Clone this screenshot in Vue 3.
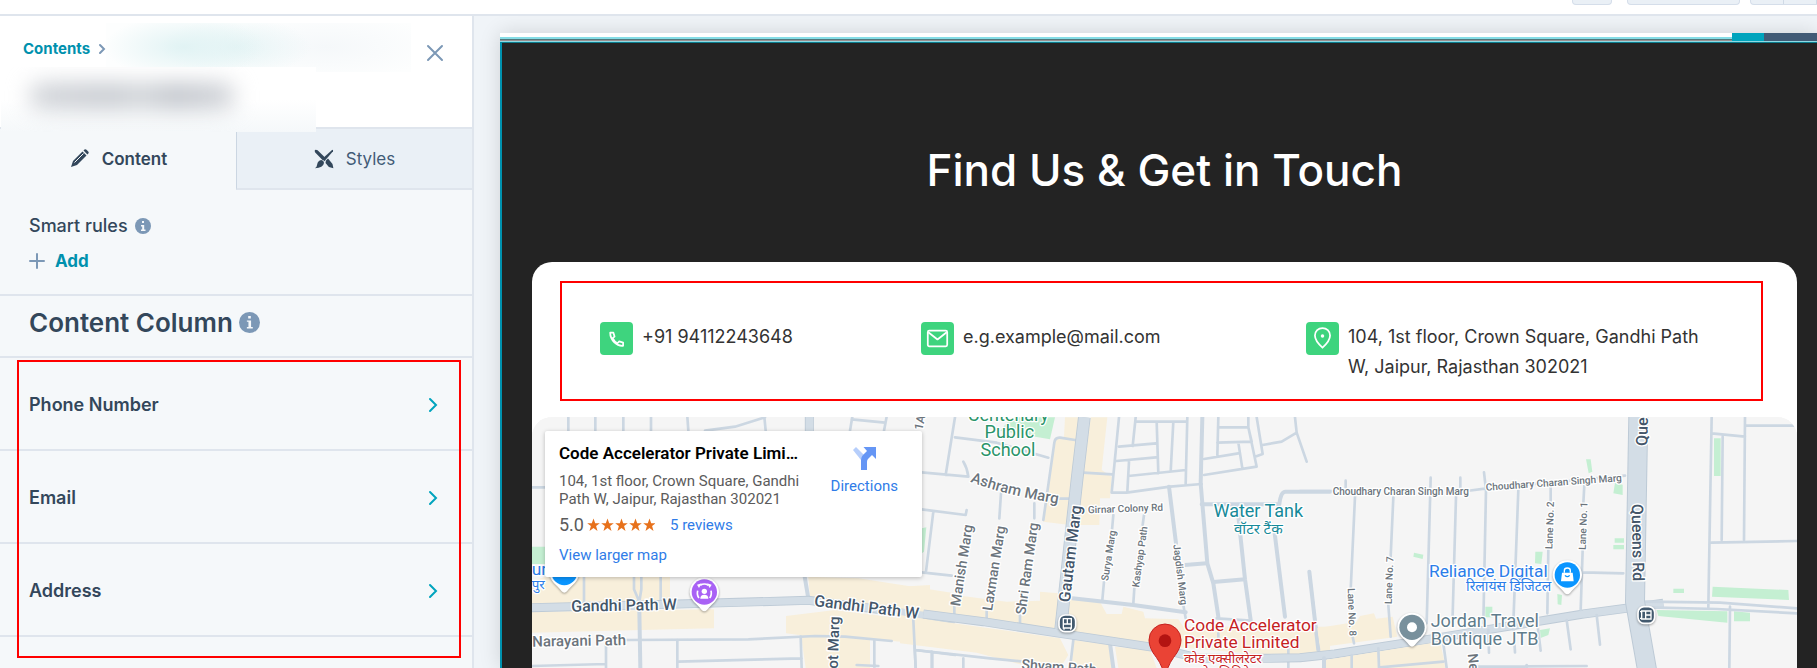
<script setup>
const rows = ['Phone Number', 'Email', 'Address']

// Minor streets, in map tile units, one list per tile
const minorWest = [
  'M130 20V62M211 20V62M295 20V62M378 20V62M487 20L490 62M540 62L630 50L720 22M718 20L722 62M975 62L982 20M1077 62L1085 20M980 28L1080 38',
  'M20 232H60M177 500V575M407 500V575M327 500V538L343 575M349 500V538L343 575M300 690L670 688L870 678L960 680L1100 693',
  'M457 690V774M460 755L830 745M827 680L830 774M243 700V774M20 768L243 762M1048 690V774M995 765L1060 768M1165 630L1172 774M1170 720L1290 735M1220 725V774'
]
const minorMid = [
  'M165 22L137 195M165 82L290 98L445 143M65 187L205 200M190 155Q202 175 205 200M65 298L197 315L200 300M100 305L78 485M65 487L155 497',
  'M303 250L298 325M403 280V325M430 330L463 98Q465 82 480 83L525 90M475 266H510M163 590V620M260 600V635M360 610V645',
  'M550 188L637 193M657 22L635 248H680L810 230L905 222M657 110L768 100M650 153L768 142M707 22L698 108M707 35H858M770 35L775 190M820 35L812 185M687 155L682 245M685 198L858 180M862 22L857 222',
  'M640 315L636 360M612 515L607 570M732 315L728 345M703 535L700 580M850 585L857 625M955 22L952 135M955 52L1045 52L1055 95L952 98M912 147L1015 130M1015 98L1027 175M912 195L1070 170L1045 52V22M1070 22L1088 132L1065 140M1088 105L1145 95L1190 68L1185 22M1190 68L1220 155',
  'M950 625L1052 632M520 690L510 774M40 630L47 774M45 720L270 745L370 755M97 730V774M190 745V774M955 670V715M1165 690V730M1165 755V774'
]
const midStreets =
  'M517 565L700 585L857 607M807 230L828 400M905 283H1138Q1142 245 1156 245H1290M855 465L920 460M940 516L1035 508M1012 290L1035 508L1052 630M1124 370L1155 620M1228 485L1255 720M630 700L640 774M1275 740L1272 774'
const minorEast = [
  'M0 243H120M500 243L560 235L975 197M137 212V240M165 260L152 540M158 680L162 700M280 262L272 440M265 585L272 680M392 203L380 640M481 203V240M468 260L457 650M552 187L558 240L550 640M655 240L640 640L645 727M752 230V275M745 420L742 610M853 225L850 280M848 420L842 600M848 487L970 490',
  'M28 485L55 715M565 660L567 728M712 640L722 722M800 630L812 718M890 615L900 704M430 700L440 774M240 772L430 755M155 735V774M235 715L237 774M525 770L860 768M680 765V774',
  'M1235 22L1225 590M1235 70L1335 80M1335 22L1332 390M1268 80L1265 390M1335 47H1490M1235 398L1490 393M1035 575L1260 578L1490 595M1045 592L1250 597L1490 610M1290 590L1288 774'
]
</script>

<template>
  <div class="app">
    <header class="toolbar">
      <button type="button" class="tool" aria-label="Undo"></button>
      <button type="button" class="tool wide" aria-label="Preview"></button>
      <div class="split">
        <button type="button" aria-label="Desktop"></button>
        <button type="button" aria-label="Mobile"></button>
      </div>
    </header>

    <div class="body">
      <aside class="sidebar">
        <div class="head">
          <nav class="crumbs">
            <a href="#">Contents</a>
            <svg width="8" height="12" viewBox="0 0 8 12"><path d="M2 2l4 4-4 4" /></svg>
          </nav>
          <button type="button" class="close" aria-label="Close">
            <svg width="18" height="18" viewBox="0 0 18 18"><path d="M2 2l14 14M16 2L2 16" /></svg>
          </button>
          <div class="redacted-crumb"></div>
          <div class="redacted-title"></div>
        </div>

        <div class="tabs" role="tablist">
          <button type="button" role="tab" aria-selected="true" class="tab active">
            <svg width="20" height="20" viewBox="0 0 20 20">
              <path d="M1 18l2-6L12.500 2.500l4 4L7 16z" />
              <path d="M13.500 1.500L14.500.5q1-.7 2 .2l1.700 1.700q1 1 .1 2L17.400 5.400z" />
              <path class="cut" d="M4.500 13.500l9-9" />
            </svg>
            Content
          </button>
          <button type="button" role="tab" aria-selected="false" class="tab">
            <svg width="20" height="20" viewBox="0 0 20 20">
              <path d="M1.200 3.600Q.2 1.800 1 1t2.600.2L11 8.600 8.500 11z" />
              <path d="M12 11.500l2-2 4.500 5.500.9 4.300-4.500-1.200-3.400-4z" />
              <path d="M18.300.7q1.200.4.7 1.500l-8.600 10-2.300-2.300z" />
              <path d="M7.200 11q3 .7 2.700 3.200-.6 4.500-9 5 2-1 2.200-3.500Q3.800 11.500 7.200 11z" />
            </svg>
            Styles
          </button>
        </div>

        <section class="smart">
          <div class="smart-title">
            Smart rules
            <svg class="info" width="16" height="16" viewBox="0 0 16 16">
              <circle cx="8" cy="8" r="8" />
              <path d="M7 3h2v2H7zM6 7h3.200v4.500H10.500V13H6v-1.500h1.200V8.500H6z" />
            </svg>
          </div>
          <button type="button" class="add">
            <svg width="16" height="16" viewBox="0 0 16 16"><path d="M8 1v14M1 8h14" /></svg>
            Add
          </button>
        </section>

        <h2 class="group">
          Content Column
          <svg class="info" width="21" height="21" viewBox="0 0 16 16">
            <circle cx="8" cy="8" r="8" />
            <path d="M7 3h2v2H7zM6 6.500h3.200v5H10.500V12.500H6v-1h1.200V7.500H6z" />
          </svg>
        </h2>

        <div class="fields">
          <button v-for="row in rows" :key="row" type="button" class="field">
            {{ row }}
            <svg width="10" height="16" viewBox="0 0 10 16"><path d="M2 2l6 6-6 6" /></svg>
          </button>
          <div class="marker"></div>
        </div>
      </aside>

      <main class="canvas">
        <div class="frame">
          <div class="strip"><span class="chip teal"></span><span class="chip slate"></span></div>
          <section class="module">
            <h1>Find Us &amp; Get in Touch</h1>
            <div class="card">
              <div class="contacts">
                <div class="contact">
                  <span class="badge">
                    <svg width="34" height="34" viewBox="0 0 34 34">
                      <path d="M10.500 11h3.300l1.200 4-2 1.700q1.700 3.600 5 5.200l1.800-2 4 1.300v3.300q-5 .5-9-3.500-4.300-4.500-4.300-10z" />
                    </svg>
                  </span>
                  <span>+91 94112243648</span>
                </div>
                <div class="contact">
                  <span class="badge">
                    <svg width="34" height="34" viewBox="0 0 34 34">
                      <rect x="7" y="9" width="20" height="16" rx="1.500" /><path d="M7.500 10.500L17 18l9.500-7.500" />
                    </svg>
                  </span>
                  <span>e.g.example@mail.com</span>
                </div>
                <div class="contact">
                  <span class="badge">
                    <svg width="34" height="34" viewBox="0 0 34 34">
                      <path d="M17 26.500q-7.800-7-7.800-12.500a7.800 7.800 0 0 1 15.600 0q0 5.500-7.800 12.500z" /><circle class="dot" cx="17" cy="14.500" r="1.800" />
                    </svg>
                  </span>
                  <span>104, 1st floor, Crown Square, Gandhi Path<br />W, Jaipur, Rajasthan 302021</span>
                </div>
              </div>

              <div class="map">
                <svg class="tiles" viewBox="0 0 3795 753" preserveAspectRatio="xMidYMin slice">
                  <rect class="land" width="3795" height="753" />

                  <g transform="translate(-21 -21)">
                    <path class="tan" d="M60 500H435V570L20 583V515zM20 605L567 598V655L440 658 20 668zM850 500L1000 505 1290 550V620L855 562zM783 618L930 600 1290 645V708L1035 688V774H842L828 676 783 670z" />
                    <path class="park" d="M20 410H62V462H20zM1190 355L1204 352 1197 425 1190 430z" />
                    <path v-for="d in minorWest" :key="d" class="street" :d="d" />
                    <path class="street mid" d="M343 600L346 774M839 500L850 565" />
                    <path class="edge" d="M20 593L430 583 850 571 1000 590 1290 628M853 20V70" />
                    <path class="road" d="M20 593L430 583 850 571 1000 590 1290 628M853 20V70" />
                  </g>

                  <g transform="translate(1104 -21)">
                    <path class="tan" d="M0 530L90 525V545L320 575 420 572V545L475 550 470 660 70 605 0 595zM495 22H540L510 345 430 335 463 85 492 80zM572 22H622L605 180 635 200 630 265H600L598 345H530zM500 560L600 575 620 612 665 612 670 590 730 605 735 625 835 628 850 650 1290 650V735L1100 735 760 705 480 660zM0 615L130 635 480 685 505 735 480 774H400L230 728 0 700zM520 690L630 705 640 774H515zM645 710L750 720 770 774H655z" />
                    <path class="park" d="M335 22H465L450 88 300 62z" />
                    <path v-for="d in minorMid" :key="d" class="street" :d="d" />
                    <path class="street mid" :d="midStreets" />
                    <path class="street mid" d="M907 22L902 220 922 460 940 520 955 620" />
                    <path class="edge big" d="M553 22L532 200 510 400 482 658" />
                    <path class="edge" d="M70 612L250 635 480 670 760 712 900 745H1100L1200 743 1304 732 1604 685 1940 630 2050 612 2290 580" />
                    <path class="road big" d="M553 22L532 200 510 400 482 658" />
                    <path class="road" d="M70 612L250 635 480 670 760 712 900 745H1100L1200 743 1304 732 1604 685 1940 630 2050 612 2290 580" />
                  </g>

                  <g transform="translate(2304 -21)">
                    <path class="tan" d="M50 655L170 635 180 618 222 610 228 626 278 620 292 680 60 712zM75 750L420 695 432 750 436 774H75z" />
                    <path class="park" d="M1242 85H1262V198H1242zM858 148L872 148 877 185 866 190zM945 218L968 224V255L940 250zM944 385H972V398H944zM940 405H972V418H940zM706 425H728L724 462 705 460zM342 428L370 434 368 447 340 440zM772 552L786 555 784 585 773 583zM556 590H577V622H556zM720 660L750 655 745 675 722 684zM1120 536H1152V549H1120zM1238 530L1465 540 1467 570 1236 560zM1070 600L1282 604V638L1075 618zM1302 604L1350 608V634H1302z" />
                    <path v-for="d in minorEast" :key="d" class="street" :d="d" />
                    <path class="street mid" d="M72 745V774" />
                    <path class="edge queens" d="M1015 15L1005 575 1042 785" />
                    <path class="road queens" d="M1015 15L1005 575 1042 785" />
                  </g>

                  <g class="labels" transform="translate(-21 -21)">
                    <text x="20" y="495" class="blue place-name">ur</text>
                    <text x="20" y="537" class="blue s40">पुर</text>
                    <text x="139" y="605" class="dark s48" transform="rotate(-1 139 605)">Gandhi Path W</text>
                    <text x="866" y="588" class="dark s48" transform="rotate(7 866 588)">Gandhi Path W</text>
                    <text x="22" y="710" class="grey s45" transform="rotate(-1 22 710)">Narayani Path</text>
                    <text x="938" y="776" class="dark s45" transform="rotate(-88 938 776)">ot Marg</text>
                    <text x="1192" y="62" class="grey s36" transform="rotate(-78 1192 62)">1A</text>
                    <path class="pin-base" d="M74 490a44 44 0 0 1 88 0q0 20-22 38-10 10-14 16-8 8-16 0-4-6-14-16-22-18-22-38z" />
                    <circle class="shop" cx="118" cy="488" r="38" />
                    <path class="pin-base" d="M494 546a44 44 0 0 1 88 0q0 20-22 38-10 10-14 16-8 8-16 0-4-6-14-16-22-18-22-38z" />
                    <circle class="temple" cx="538" cy="546" r="38" />
                    <path class="temple-icon" d="M526 526q12-8 24 0M522 564q-7-8-4-22M554 564q7-8 4-22" />
                    <path class="glyph" d="M516 524l14-4-8 14zM560 524l-14-4 8 14z" />
                    <circle class="glyph" cx="538" cy="544" r="8" /><path class="glyph" d="M526 566q0-12 12-12t12 12z" />
                  </g>

                  <g class="labels" transform="translate(1104 -21)">
                    <defs><path id="ashram" d="M210 215Q310 254 480 282" /></defs>
                    <text x="325" y="34" class="green s54" text-anchor="middle">Centenary</text>
                    <text x="328" y="84" class="green s54" text-anchor="middle">Public</text>
                    <text x="324" y="137" class="green s54" text-anchor="middle">School</text>
                    <text class="grey s45"><textPath href="#ashram">Ashram Marg</textPath></text>
                    <text x="180" y="590" class="grey s42" transform="rotate(-81 180 590)">Manish Marg</text>
                    <text x="276" y="604" class="grey s42" transform="rotate(-81 276 604)">Laxman Marg</text>
                    <text x="376" y="616" class="grey s42" transform="rotate(-82 376 616)">Shri Ram Marg</text>
                    <text x="509" y="578" class="dark s48" transform="rotate(-83 509 578)">Gautam Marg</text>
                    <text x="564" y="310" class="grey s30" transform="rotate(-2 564 310)">Girnar Colony Rd</text>
                    <text x="624" y="514" class="grey s30" transform="rotate(-81 624 514)">Surya Marg</text>
                    <text x="717" y="533" class="grey s30" transform="rotate(-82 717 533)">Kashyap Path</text>
                    <text x="820" y="404" class="grey s30" transform="rotate(83 820 404)">Jagdish Marg</text>
                    <text x="364" y="777" class="grey s42" transform="rotate(4 364 777)">Shyam Path</text>
                    <text x="1075" y="320" class="water s54" text-anchor="middle">Water Tank</text>
                    <text x="1075" y="372" class="water s45" text-anchor="middle">वॉटर टैंक</text>
                    <text x="852" y="663" class="red place-name">Code Accelerator</text>
                    <text x="852" y="714" class="red place-name">Private Limited</text>
                    <text x="852" y="758" class="red s40">कोड एक्सीलरेटर</text>
                    <text x="852" y="800" class="red s40">प्राइवेट लिमिटेड</text>
                    <path class="main-pin" d="M747 690a48 48 0 0 1 96 0q0 25-22 52-22 30-22 60h-8q0-30-22-60-22-27-22-52z" />
                    <circle class="main-dot" cx="795" cy="692" r="19" />
                    <rect class="transit" x="477" y="615" width="50" height="50" rx="18" />
                    <path class="transit-icon" d="M490 626h24v28h-24zM490 642h24M502 626v16M492 654v5M512 654v5" />
                  </g>

                  <g class="labels" transform="translate(2304 -21)">
                    <text x="98" y="254" class="grey s30">Choudhary Charan Singh Marg</text>
                    <text x="558" y="242" class="grey s30" transform="rotate(-4 558 242)">Choudhary Charan Singh Marg</text>
                    <text x="757" y="418" class="grey s30" transform="rotate(-88 757 418)">Lane No. 2</text>
                    <text x="857" y="420" class="grey s30" transform="rotate(-88 857 420)">Lane No. 1</text>
                    <text x="275" y="583" class="grey s30" transform="rotate(-88 275 583)">Lane No. 7</text>
                    <text x="143" y="535" class="grey s30" transform="rotate(88 143 535)">Lane No. 8</text>
                    <text x="995" y="282" class="dark s48" transform="rotate(89 995 282)">Queens Rd</text>
                    <text x="1042" y="108" class="dark s48" transform="rotate(-89 1042 108)">Queens Rd</text>
                    <text x="503" y="732" class="grey s42" transform="rotate(84 503 732)">New Marg</text>
                    <text x="387" y="500" class="blue place-name">Reliance Digital</text>
                    <text x="498" y="543" class="blue s42">रिलायंस डिजिटल</text>
                    <text x="392" y="652" class="slate-text s54">Jordan Travel</text>
                    <text x="392" y="705" class="slate-text s54">Boutique JTB</text>
                    <path class="pin-base" d="M758 495a44 44 0 0 1 88 0q0 20-22 38-10 10-14 16-8 8-16 0-4-6-14-16-22-18-22-38z" />
                    <circle class="shop" cx="802" cy="495" r="38" />
                    <path class="glyph" d="M786 488h32l3 26h-38z" /><path class="bag" d="M793 488v-6q0-8 9-8t9 8v6" /><path class="smile" d="M795 496q7 8 14 0" />
                    <path class="pin-base" d="M292 652a44 44 0 0 1 88 0q0 20-22 38-10 10-14 16-8 8-16 0-4-6-14-16-22-18-22-38z" />
                    <circle class="place" cx="336" cy="652" r="38" /><circle class="glyph" cx="336" cy="652" r="15" />
                    <rect class="transit" x="1014" y="590" width="50" height="50" rx="18" />
                    <path class="transit-icon" transform="rotate(90 1039 615)" d="M1027 601h24v28h-24zM1027 617h24M1039 601v16M1029 629v5M1049 629v5" />
                  </g>
                </svg>

                <div class="place-card">
                  <div class="place-info">
                    <h3>Code Accelerator Private Limi…</h3>
                    <p>104, 1st floor, Crown Square, Gandhi<br />Path W, Jaipur, Rajasthan 302021</p>
                    <div class="rating">
                      <span>5.0</span>
                      <svg width="68" height="14" viewBox="0 0 68 14">
                        <path v-for="i in 5" :key="i" :transform="`translate(${(i - 1) * 14} 0)`" d="M6.500.5l1.700 4.700h4.600L9.100 8l1.400 4.900-4-2.900-4 2.900L3.900 8 .2 5.200h4.600z" />
                      </svg>
                      <a href="#">5 reviews</a>
                    </div>
                    <a href="#">View larger map</a>
                  </div>
                  <a href="#" class="directions">
                    <svg width="24" height="24" viewBox="0 0 24 24">
                      <path class="pale" d="M1 4l3-3 9 9-4 4z" />
                      <path d="M9 24V14q0-3 2-5l4-4-3.500-4H24v12l-4-4-4 4q-1 1-1 3v8z" />
                    </svg>
                    Directions
                  </a>
                </div>
              </div>
              <div class="contacts-marker"></div>
            </div>
          </section>
        </div>
      </main>
    </div>
  </div>
</template>

<style>
body { margin: 0; overflow: hidden; }
</style>

<style scoped>
* { box-sizing: border-box; }
button { font: inherit; color: inherit; padding: 0; border: 0; background: none; cursor: pointer; }
a { text-decoration: none; }
svg { display: block; flex: none; }
.app { height: 100vh; display: flex; flex-direction: column; overflow: hidden; background: #fff; font-family: Inter, "Liberation Sans", sans-serif; color: #33475b; }
.toolbar { flex: none; display: flex; align-items: flex-start; justify-content: flex-end; height: 16px; border-bottom: 2px solid #dfe5ed; }
.tool, .split { height: 5px; background: #eaf0f6; border: 1px solid #d5deea; border-top: 0; border-radius: 0 0 4px 4px; }
.tool { width: 40px; margin-right: 15px; }
.tool.wide { width: 113px; margin-right: 10px; }
.split { display: flex; width: 67px; border-right: 0; border-radius: 0 0 0 4px; }
.split button { width: 39px; border-right: 1px solid #d0dae6; }
.body { flex: 1; min-height: 0; display: flex; }
.sidebar { flex: none; width: 474px; border-right: 2px solid #dfe5ed; background: #f5f8fa; }
.head { position: relative; height: 113px; display: flex; justify-content: space-between; align-items: flex-start; padding: 23px 28px 0 23px; background: #fff; border-bottom: 2px solid #dfe5ed; }
.crumbs { display: flex; align-items: center; gap: 8px; font-size: 15px; line-height: 20px; font-weight: 700; }
.crumbs a { color: #0091ae; }
.crumbs svg, .close svg, .add svg, .field svg { fill: none; stroke: #7c98b6; stroke-width: 2; stroke-linecap: round; }
.close { margin-top: 5px; }
.redacted-crumb { position: absolute; left: 106px; top: 7px; width: 305px; height: 49px; background: radial-gradient(ellipse 80px 32px at 78px 24px, #e1f3f4, transparent), radial-gradient(ellipse 75px 30px at 130px 24px, #e5f4f5, transparent), radial-gradient(ellipse 110px 34px at 220px 24px, #f5f8fa, transparent), #fdfefe; }
.redacted-title { position: absolute; left: 1px; top: 51px; width: 315px; height: 65px; overflow: hidden; background: linear-gradient(rgba(245, 248, 250, 0) 50%, #f5f8fa), #fff; }
.redacted-title::before { content: ""; position: absolute; left: 28px; top: 16px; width: 206px; height: 26px; border-radius: 13px; background: linear-gradient(90deg, #d0d3d8, #c5c9cf 40%, #d0d4d8 55%, #bfc3ca 70%, #d0d3d8); filter: blur(11px); }
.tabs { display: flex; height: 61px; }
.tab { flex: 1; display: flex; align-items: center; justify-content: center; gap: 12px; font-size: 17px; background: #eaf0f6; border-left: 1px solid #cbd6e2; border-bottom: 2px solid #dfe5ed; color: #425b76; }
.tab.active { font-weight: 600; background: #f5f8fa; border-color: transparent; color: #33475b; }
.tab svg { fill: #33475b; }
.tab .cut { stroke: #f5f8fa; stroke-width: 1; }
.smart { height: 106px; padding: 24px 29px 0; border-bottom: 2px solid #dfe5ed; }
.smart-title { display: flex; align-items: center; gap: 7px; font-size: 18px; line-height: 24px; font-weight: 500; }
.info circle { fill: #7c98b6; }
.info path { fill: #f5f8fa; }
.add { display: flex; align-items: center; gap: 10px; margin-top: 11px; font-size: 17px; line-height: 24px; font-weight: 700; color: #0091ae; }
.group { display: flex; align-items: center; gap: 6px; height: 62px; margin: 0; padding: 0 29px 8px; border-bottom: 2px solid #dfe5ed; font-size: 26px; font-weight: 600; }
.fields { position: relative; height: 301px; }
.field { display: flex; align-items: center; justify-content: space-between; width: 100%; height: 93px; padding: 2px 34px 0 29px; border-bottom: 2px solid #dfe5ed; font-size: 18px; font-weight: 600; }
.field svg { stroke: #00a4bd; }
.marker { position: absolute; left: 17px; right: 11px; top: 2px; height: 298px; border: 2px solid #f00; }
.canvas { flex: 1; min-width: 0; padding: 17px 0 0 26px; background: #f0f4f8; overflow: hidden; }
.frame { height: 100%; display: flex; flex-direction: column; background: #fff; box-shadow: 0 0 20px rgba(0, 0, 0, .14); }
.strip { flex: none; display: flex; justify-content: flex-end; height: 9px; background: linear-gradient(#fff 4px, #86dde6 4px 6px, #53777b 6px 7px, #9b8f90 7px 8px, #8edbe4 8px); }
.chip.teal { width: 32px; height: 8px; background: #00a4bd; }
.chip.slate { width: 53px; height: 8px; background: #425b76; }
.module { flex: 1; min-height: 0; padding: 0 20px 0 30px; background: #232323; border-left: 2px solid #0091ae; border-top: 1px solid #0b7c8d; }
h1 { margin: 0; padding-top: 97px; height: 219px; text-align: center; color: #fff; font: 500 44px/60px Inter, sans-serif; }
.card { position: relative; min-height: 600px; background: #fff; border-radius: 20px; }
.contacts { display: grid; grid-template-columns: 321px 385px 1fr; height: 155px; padding: 60px 0 0 68px; color: #333; font: 18px/30px Inter, sans-serif; }
.contact { display: flex; align-items: flex-start; gap: 9px; }
.badge { flex: none; border-radius: 4px; background: #3ed47e; }
.badge svg { width: 33px; height: 33px; fill: none; stroke: #fff; stroke-width: 1.8; stroke-linejoin: round; }
.badge .dot { fill: #fff; stroke: none; }
.contacts-marker { position: absolute; left: 28px; right: 34px; top: 19px; height: 120px; border: 2px solid #f00; }
.map { position: relative; height: 445px; overflow: hidden; border-radius: 20px; background: #f5f5f5; }
.tiles { width: 100%; overflow: hidden; font-family: Roboto, "Noto Sans", sans-serif; }
.land { fill: #f5f5f5; }
.tan { fill: #f8efdb; }
.park { fill: #c4efd2; }
.street { fill: none; stroke: #ccd7e2; stroke-width: 8; stroke-linejoin: round; stroke-linecap: round; }
.street.mid { stroke-width: 12; }
.edge, .road { fill: none; stroke-linejoin: round; }
.edge { stroke: #bdcad6; stroke-width: 27; }
.road { stroke: #d3dde6; stroke-width: 22; }
.edge.big { stroke-width: 38; }
.road.big { stroke-width: 33; }
.edge.queens { stroke-width: 60; }
.road.queens { stroke-width: 54; }
.labels text { paint-order: stroke; stroke: #fff; stroke-width: 8; stroke-linejoin: round; }
.s30 { font-size: 30px; }
.s36 { font-size: 36px; }
.s40 { font-size: 40px; }
.s42 { font-size: 42px; }
.s45 { font-size: 45px; }
.s48 { font-size: 48px; }
.s54 { font-size: 54px; }
.place-name { font-size: 52px; }
.dark { fill: #44566a; font-weight: 500; }
.grey { fill: #6b747c; font-weight: 500; }
.blue { fill: #2b7de9; }
.green { fill: #2a9469; }
.water { fill: #168a99; }
.red { fill: #c5221f; }
.slate-text { fill: #5f7d8c; }
.pin-base { fill: #fff; filter: drop-shadow(0 3px 3px rgba(0, 0, 0, .35)); }
.shop { fill: #0a95ff; }
.temple { fill: #a962f5; }
.temple-icon { fill: none; stroke: #fff; stroke-width: 5; }
.glyph { fill: #fff; }
.bag { fill: none; stroke: #fff; stroke-width: 4; }
.smile { fill: none; stroke: #0a95ff; stroke-width: 4; }
.place { fill: #78909c; }
.main-pin { fill: #ea4335; stroke: #c5221f; stroke-width: 3; }
.main-dot { fill: #b31412; }
.transit { fill: #435a6f; stroke: #fff; stroke-width: 5; filter: drop-shadow(0 3px 3px rgba(0, 0, 0, .35)); }
.transit-icon { fill: none; stroke: #fff; stroke-width: 4; }
.place-card { position: absolute; left: 13px; top: 14px; width: 377px; height: 146px; display: flex; justify-content: space-between; padding: 10px 24px 0 14px; background: #fff; border-radius: 2px; box-shadow: 0 1px 4px rgba(0, 0, 0, .25); font: 15px/18px Roboto, sans-serif; color: #5b5b5b; }
.place-card a { color: #2f7ce8; }
h3 { margin: 0; font-size: 17px; line-height: 24px; font-weight: 600; color: #000; }
p { margin: 7px 0 0; }
.rating { display: flex; align-items: center; margin: 6px 0 10px; line-height: 22px; }
.rating span { font-size: 18px; margin-right: 3px; }
.rating svg { fill: #e7711b; margin-right: 15px; }
.directions { display: flex; flex-direction: column; align-items: center; gap: 7px; padding-top: 5px; }
.directions svg { fill: #6596f5; }
.directions .pale { fill: #b6cefb; }
</style>
